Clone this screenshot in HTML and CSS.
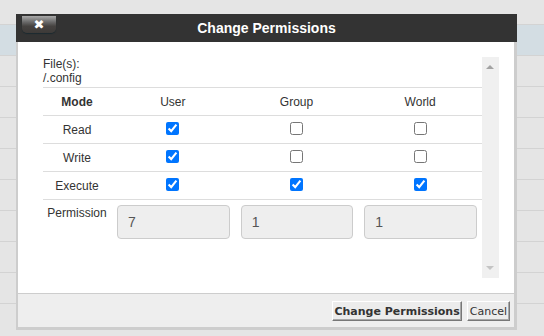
FILE: index.html
```html
<!DOCTYPE html>
<html lang="en">
<head>
    <meta charset="UTF-8">
    <title>Change Permissions</title>
    <link rel="stylesheet" href="styles.css">
</head>
<body>
    <div class="file-list">
        <div class="file-row selected"></div>
        <div class="file-row"></div>
        <div class="file-row"></div>
        <div class="file-row"></div>
        <div class="file-row"></div>
        <div class="file-row"></div>
        <div class="file-row"></div>
        <div class="file-row"></div>
        <div class="file-row"></div>
        <div class="file-row"></div>
    </div>

    <div class="dialog">
        <div class="dialog-title">
            <button class="close-btn">&#x2716;</button>
            Change Permissions
        </div>
        <div class="dialog-main">
            <div class="dialog-content">
                <div class="scroll-box">
                    <div class="scroll-inner">
                        <div class="files">File(s):<br>/.config</div>
                        <table class="perms">
                            <tr>
                                <th class="mode-col">Mode</th>
                                <td>User</td>
                                <td>Group</td>
                                <td>World</td>
                            </tr>
                            <tr>
                                <td class="mode-col">Read</td>
                                <td><input type="checkbox" checked></td>
                                <td><input type="checkbox"></td>
                                <td><input type="checkbox"></td>
                            </tr>
                            <tr>
                                <td class="mode-col">Write</td>
                                <td><input type="checkbox" checked></td>
                                <td><input type="checkbox"></td>
                                <td><input type="checkbox"></td>
                            </tr>
                            <tr>
                                <td class="mode-col">Execute</td>
                                <td><input type="checkbox" checked></td>
                                <td><input type="checkbox" checked></td>
                                <td><input type="checkbox" checked></td>
                            </tr>
                            <tr class="perm-row">
                                <td class="mode-col">Permission</td>
                                <td><input class="perm-input" type="text" value="7" disabled></td>
                                <td><input class="perm-input" type="text" value="1" disabled></td>
                                <td><input class="perm-input" type="text" value="1" disabled></td>
                            </tr>
                        </table>
                    </div>
                    <div class="scrollbar">
                        <span class="arrow-up"></span>
                        <span class="arrow-down"></span>
                    </div>
                </div>
            </div>
            <div class="dialog-footer">
                <button class="btn btn-primary">Change Permissions</button>
                <button class="btn">Cancel</button>
            </div>
        </div>
    </div>
</body>
</html>
```

FILE: styles.css
```css
* {
    margin: 0;
    padding: 0;
    box-sizing: border-box;
}

body {
    background: #e5e5e5;
    font-family: 'Liberation Sans', Arial, sans-serif;
    overflow: hidden;
}

/* list behind the dialog */
.file-list {
    padding-top: 24px;
}

.file-row {
    height: 31px;
    border-top: 1px solid #d3d3d3;
}

.file-row.selected {
    background: #d3dde3;
}

/* dialog */
.dialog {
    position: absolute;
    left: 16px;
    top: 14px;
    width: 501px;
}

.dialog-title {
    position: relative;
    height: 28px;
    background: #333;
    color: #fff;
    font-size: 14px;
    font-weight: 700;
    line-height: 28px;
    text-align: center;
}

.close-btn {
    position: absolute;
    left: 6px;
    top: 2px;
    width: 34px;
    height: 17px;
    border: none;
    border-radius: 0 0 5px 5px;
    background: linear-gradient(#a9a9a9 0%, #6a6a6a 35%, #454240 60%, #3d3a38 100%);
    box-shadow: 0 1px 1px #1b2a30;
    color: #fff;
    font-family: 'DejaVu Sans', sans-serif;
    font-size: 13px;
    line-height: 17px;
}

.dialog-main {
    border: 2px solid #cdcdcd;
    border-top: 0;
    border-bottom-width: 3px;
    border-right-width: 3px;
}

.dialog-content {
    background: #fff;
    padding: 15px;
}

.scroll-box {
    display: flex;
    height: 221px;
}

.scroll-inner {
    flex: 1;
    padding-left: 10px;
    color: #333;
    font-size: 12px;
}

.files {
    line-height: 14px;
    margin-bottom: 2px;
}

.perms {
    width: 100%;
    border-collapse: collapse;
    table-layout: fixed;
}

.perms td,
.perms th {
    height: 28px;
    border-top: 1px solid #dddddd;
    text-align: center;
    vertical-align: middle;
    font-size: 12px;
    color: #333;
}

.perms .mode-col {
    width: 68px;
}

.perms th {
    font-weight: 700;
}

.perms input[type="checkbox"] {
    display: block;
    width: 13px;
    height: 13px;
    margin: 0 auto 3px;
}

.perm-row td {
    vertical-align: top;
    padding: 5px 5px 0 6px;
}

.perm-row td.mode-col {
    padding: 6px 0 0 0;
    line-height: 14px;
}

.perm-input {
    width: 100%;
    height: 34px;
    padding: 6px 10px;
    border: 1px solid #ccc;
    border-radius: 4px;
    background: #eee;
    color: #555;
    font-family: 'Liberation Sans', Arial, sans-serif;
    font-size: 14px;
}

.scrollbar {
    position: relative;
    width: 17px;
    background: #f0f0f0;
}

.arrow-up,
.arrow-down {
    position: absolute;
    left: 4px;
    width: 0;
    height: 0;
    border-left: 4px solid transparent;
    border-right: 4px solid transparent;
}

.arrow-up {
    top: 8px;
    border-bottom: 4px solid #a3a3a3;
}

.arrow-down {
    bottom: 8px;
    border-top: 4px solid #c4c4c4;
}

.dialog-footer {
    display: flex;
    justify-content: flex-end;
    gap: 5px;
    height: 34px;
    padding: 7px 4px 0 0;
    background: #eee;
    border-top: 1px solid #cdcdcd;
}

.btn {
    height: 20px;
    padding: 0 2px;
    background: #ececec;
    border: 1px solid;
    border-color: #fff #777 #777 #fff;
    box-shadow: inset -1px -1px 0 #a8a8a8;
    color: #333;
    font-family: 'DejaVu Sans', Verdana, sans-serif;
    font-size: 11px;
    line-height: 17px;
}

.btn-primary {
    padding: 0 1px;
    font-weight: 700;
}
```
